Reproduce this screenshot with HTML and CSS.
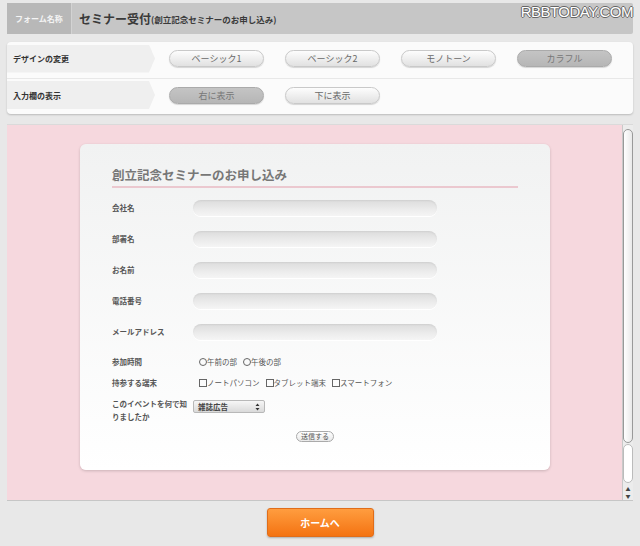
FILE: index.html
```html
<!DOCTYPE html>
<html>
<head>
  <meta charset="utf-8">
  <link rel="stylesheet" href="styles.css">
</head>
<body>
  <div class="page">
    <div class="topbar">
      <div class="topbar-label">フォーム名称</div>
      <div class="topbar-title">セミナー受付<small>(創立記念セミナーのお申し込み)</small></div>
    </div>
    <div class="watermark">RBBTODAY.COM</div>

    <div class="settings">
      <div class="setting-row">
        <div class="setting-label">デザインの変更</div>
        <div class="setting-buttons">
          <button class="opt-btn">ベーシック1</button>
          <button class="opt-btn">ベーシック2</button>
          <button class="opt-btn">モノトーン</button>
          <button class="opt-btn active">カラフル</button>
        </div>
      </div>
      <div class="setting-row">
        <div class="setting-label">入力欄の表示</div>
        <div class="setting-buttons">
          <button class="opt-btn active">右に表示</button>
          <button class="opt-btn">下に表示</button>
        </div>
      </div>
    </div>

    <div class="preview">
      <div class="preview-body">
        <div class="form-card">
          <div class="form-title">創立記念セミナーのお申し込み</div>

          <div class="field-row">
            <span class="field-label">会社名</span>
            <input class="text-input" type="text">
          </div>
          <div class="field-row">
            <span class="field-label">部署名</span>
            <input class="text-input" type="text">
          </div>
          <div class="field-row">
            <span class="field-label">お名前</span>
            <input class="text-input" type="text">
          </div>
          <div class="field-row">
            <span class="field-label">電話番号</span>
            <input class="text-input" type="text">
          </div>
          <div class="field-row">
            <span class="field-label">メールアドレス</span>
            <input class="text-input" type="text">
          </div>

          <div class="choice-row first">
            <span class="field-label">参加時間</span>
            <div class="choices">
              <label class="choice"><span class="radio"></span>午前の部</label>
              <label class="choice"><span class="radio"></span>午後の部</label>
            </div>
          </div>
          <div class="choice-row">
            <span class="field-label">持参する端末</span>
            <div class="choices">
              <label class="choice"><span class="check"></span>ノートパソコン</label>
              <label class="choice"><span class="check"></span>タブレット端末</label>
              <label class="choice"><span class="check"></span>スマートフォン</label>
            </div>
          </div>
          <div class="select-row">
            <span class="field-label">このイベントを何で知りましたか</span>
            <div class="select-box">
              <span>雑誌広告</span>
              <svg width="5" height="8" viewBox="0 0 5 8"><path d="M2.5 0.5 L4.5 3 H0.5 Z M2.5 7.5 L0.5 5 H4.5 Z" fill="#333"/></svg>
            </div>
          </div>
          <div class="submit-wrap">
            <button class="submit-btn">送信する</button>
          </div>
        </div>
      </div>
      <div class="scrollbar">
        <div class="scroll-thumb"></div>
        <div class="scroll-track"></div>
        <div class="scroll-arrows">
          <span>&#9650;</span>
          <span>&#9660;</span>
        </div>
      </div>
    </div>

    <div class="footer">
      <button class="btn-home">ホームへ</button>
    </div>
  </div>
</body>
</html>
```

FILE: styles.css
```css
body {
  margin: 0;
  background: #e8e8e8;
  font-family: "Noto Sans CJK JP", "Noto Sans", sans-serif;
  color: #333;
}

.page {
  position: relative;
  height: 546px;
  padding: 3px 7px 0;
  box-sizing: border-box;
}

/* top bar */
.topbar {
  display: flex;
  height: 31px;
  background: #c6c6c6;
  border-radius: 2px;
}

.topbar-label {
  width: 64px;
  display: flex;
  align-items: center;
  justify-content: center;
  background: #b8b8b8;
  border-right: 1px solid #d3d3d3;
  color: #f4f4f4;
  font-size: 8px;
  font-weight: bold;
}

.topbar-title {
  display: flex;
  align-items: center;
  padding-left: 7px;
  font-size: 12px;
  font-weight: bold;
  color: #3a3a3a;
}

.topbar-title small {
  font-size: 8.5px;
}

.watermark {
  position: absolute;
  top: 3px;
  right: 7px;
  font-family: "Liberation Sans", sans-serif;
  font-size: 15px;
  letter-spacing: -0.5px;
  color: #fff;
  text-shadow: -1px 0 #666, 1px 0 #666, 0 -1px #666, 0 1px #666;
}

/* design settings */
.settings {
  margin-top: 8px;
  background: #fbfbfb;
  border-radius: 4px;
  box-shadow: 0 1px 2px rgba(0, 0, 0, 0.2);
}

.setting-row {
  display: flex;
  align-items: center;
  height: 36px;
  padding-bottom: 3px;
  box-sizing: border-box;
}

.setting-row + .setting-row {
  border-top: 1px solid #e8e8e8;
}

.setting-label {
  width: 148px;
  height: 28px;
  display: flex;
  align-items: center;
  padding-left: 6px;
  box-sizing: border-box;
  background: #efefef;
  clip-path: polygon(0 0, 142px 0, 100% 50%, 142px 100%, 0 100%);
  font-size: 8px;
  font-weight: bold;
  color: #333;
}

.setting-buttons {
  display: flex;
  gap: 21px;
  margin-left: 14px;
}

.opt-btn {
  width: 95px;
  height: 17px;
  padding: 0;
  border: 1px solid #c9c9c9;
  border-radius: 9px;
  background: linear-gradient(#fdfdfd, #e1e1e1);
  box-shadow: 0 1px 1px rgba(0, 0, 0, 0.15);
  font-family: inherit;
  font-size: 9px;
  color: #6a6a6a;
}

.opt-btn.active {
  background: linear-gradient(#c4c4c4, #b6b6b6);
  border-color: #aaa;
  color: #777;
}

/* preview area */
.preview {
  display: flex;
  height: 377px;
  margin-top: 10px;
  background: #f6d8de;
  border-top: 1px solid #dadada;
  border-bottom: 1px solid #c6c6c6;
  box-sizing: border-box;
}

.preview-body {
  flex: 1;
  padding: 19px 0 0 73px;
}

.form-card {
  width: 470px;
  height: 326px;
  padding: 22px 32px 0;
  box-sizing: border-box;
  background: linear-gradient(#f1f2f2, #ffffff);
  border-radius: 6px;
  box-shadow: 0 1px 3px rgba(0, 0, 0, 0.18);
}

.form-title {
  width: 406px;
  line-height: 18px;
  padding-bottom: 2px;
  margin-bottom: 4px;
  border-bottom: 2px solid #ebc8cf;
  font-size: 12.5px;
  font-weight: bold;
  color: #777;
}

.field-row {
  display: flex;
  align-items: center;
  height: 31px;
}

.field-label {
  width: 81px;
  flex-shrink: 0;
  font-size: 7.5px;
  font-weight: bold;
  line-height: 13px;
  color: #555;
}

.text-input {
  width: 244px;
  height: 16px;
  padding: 0;
  border: none;
  border-radius: 8px;
  background: linear-gradient(#dcdcdc, #ececec 60%, #f5f5f5);
  box-shadow: inset 0 1px 2px rgba(0, 0, 0, 0.06), 0 1px 0 #fff;
}

.choice-row {
  display: flex;
  align-items: center;
  height: 21px;
}

.choice-row.first {
  margin-top: 4px;
}

.choices {
  display: flex;
  gap: 6px;
  padding-left: 6px;
}

.choice {
  display: flex;
  align-items: center;
  font-size: 7.5px;
  color: #555;
}

.radio {
  width: 6px;
  height: 6px;
  border: 1px solid #666;
  border-radius: 50%;
}

.check {
  width: 6px;
  height: 6px;
  border: 1px solid #666;
}

.select-row {
  display: flex;
  align-items: flex-start;
  margin-top: 4px;
}

.select-box {
  width: 72px;
  height: 13px;
  margin-top: 3px;
  padding: 0 4px;
  box-sizing: border-box;
  display: flex;
  align-items: center;
  justify-content: space-between;
  border: 1px solid #b8b8b8;
  border-radius: 2px;
  background: linear-gradient(#f6f6f6, #dadada);
  font-size: 7.5px;
  font-weight: bold;
  color: #444;
}

.submit-wrap {
  display: flex;
  justify-content: center;
  margin-top: 8px;
}

.submit-btn {
  width: 38px;
  height: 11px;
  padding: 0;
  border: 1px solid #aaa;
  border-radius: 6px;
  background: linear-gradient(#fff, #e9e9e9);
  font-family: inherit;
  font-size: 7px;
  line-height: 9px;
  color: #555;
}

/* fake scrollbar */
.scrollbar {
  width: 10px;
  display: flex;
  flex-direction: column;
  padding-top: 4px;
  background: #ececec;
  border-left: 1px solid #c9c9c9;
}

.scroll-thumb {
  height: 314px;
  border: 1px solid #999;
  border-radius: 5px;
  background: linear-gradient(90deg, #fff, #e9e9e9);
  box-sizing: border-box;
}

.scroll-track {
  flex: 1;
  margin-top: 1px;
  border: 1px solid #bbb;
  border-radius: 5px;
  background: #fff;
}

.scroll-arrows {
  height: 17px;
  display: flex;
  flex-direction: column;
  align-items: center;
  justify-content: center;
  font-size: 5px;
  line-height: 7px;
  color: #444;
}

/* footer */
.footer {
  display: flex;
  justify-content: center;
  padding-top: 7px;
}

.btn-home {
  width: 107px;
  height: 29px;
  border: 1px solid #e06d1a;
  border-radius: 3px;
  background: linear-gradient(#ff9d3f, #f47312);
  box-shadow: 0 1px 2px rgba(0, 0, 0, 0.25);
  font-family: inherit;
  font-size: 10px;
  font-weight: bold;
  color: #fff;
}
```
